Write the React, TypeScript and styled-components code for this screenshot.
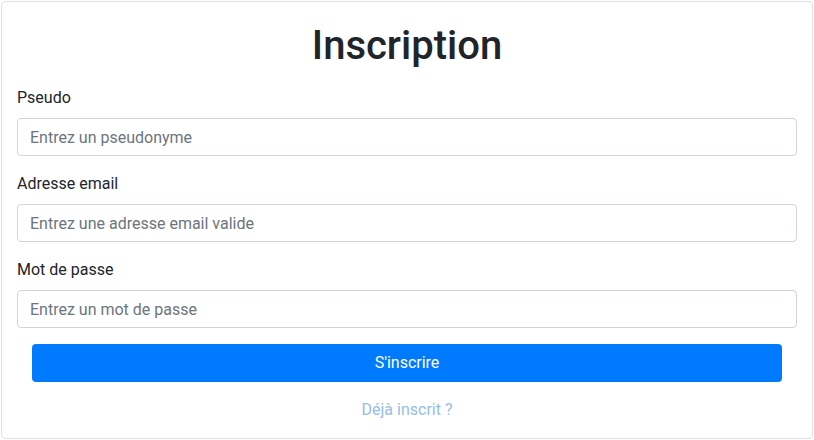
import React from "react";
import styled, { createGlobalStyle } from "styled-components";

const Global = createGlobalStyle`
  html, body { margin: 0; padding: 0; background: #fff; }
  body { font-family: Roboto, "Liberation Sans", sans-serif; color: #212529; }
  * { box-sizing: border-box; }
`;

const Page = styled.div`
  padding: 1px 1px 0 1px;
`;

const Card = styled.div`
  border: 1px solid #dfdfdf;
  border-radius: 4px;
  height: 438px;
  padding: 20px 15px 16px 15px;
  display: flex;
  flex-direction: column;
`;

const Title = styled.h1`
  margin: 0 0 16px;
  font-size: 40px;
  line-height: 48px;
  font-weight: 500;
  text-align: center;
  color: #212529;
`;

const Group = styled.div`
  display: flex;
  flex-direction: column;
  margin-bottom: 16px;
`;

const Label = styled.label`
  font-size: 16px;
  line-height: 24px;
  margin-bottom: 8px;
  color: #212529;
`;

const Input = styled.input`
  height: 38px;
  padding: 6px 12px;
  font-family: inherit;
  font-size: 16px;
  line-height: 24px;
  color: #495057;
  border: 1px solid #ced4da;
  border-radius: 4px;
  outline: none;
  &::placeholder { color: #6c757d; opacity: 1; }
`;

const Button = styled.button`
  margin: 0 15px;
  height: 38px;
  border: none;
  border-radius: 4px;
  background: #007bff;
  color: #fff;
  font-family: inherit;
  font-size: 16px;
  line-height: 24px;
  cursor: pointer;
`;

const Link = styled.a`
  margin-top: 16px;
  text-align: center;
  font-size: 16px;
  line-height: 24px;
  color: #97bde6;
  text-decoration: none;
`;

const fields = [
  { id: "pseudo", label: "Pseudo", placeholder: "Entrez un pseudonyme", type: "text" },
  { id: "email", label: "Adresse email", placeholder: "Entrez une adresse email valide", type: "email" },
  { id: "password", label: "Mot de passe", placeholder: "Entrez un mot de passe", type: "password" },
];

export default function App() {
  return (
    <Page>
      <Global />
      <Card>
        <Title>Inscription</Title>
        {fields.map((f) => (
          <Group key={f.id}>
            <Label htmlFor={f.id}>{f.label}</Label>
            <Input id={f.id} type={f.type} placeholder={f.placeholder} />
          </Group>
        ))}
        <Button>S'inscrire</Button>
        <Link href="#">Déjà inscrit ?</Link>
      </Card>
    </Page>
  );
}
